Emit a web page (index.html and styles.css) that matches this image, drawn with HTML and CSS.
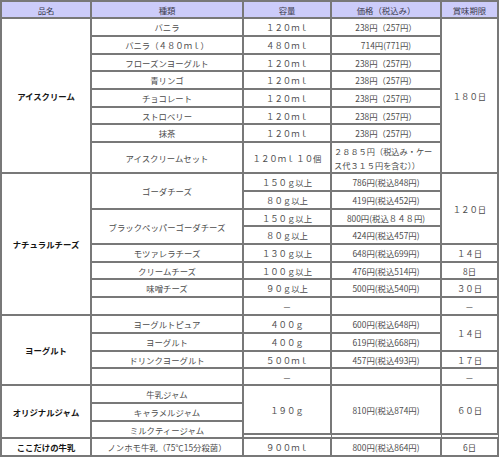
FILE: index.html
```html
<!DOCTYPE html>
<html lang="ja">
<head>
<meta charset="utf-8">
<title>商品一覧</title>
<link rel="stylesheet" href="styles.css">
</head>
<body>
<table class="items">
  <colgroup>
    <col class="w1"><col class="w2"><col class="w3"><col class="w4"><col class="w5">
  </colgroup>
  <thead>
    <tr class="h17">
      <th>品名</th><th>種類</th><th>容量</th><th>価格（税込み）</th><th>賞味期限</th>
    </tr>
  </thead>
  <tbody>
    <tr class="h18">
      <td rowspan="8" class="cat">アイスクリーム</td>
      <td>バニラ</td><td>１２０ｍｌ</td><td>238円（257円）</td>
      <td rowspan="8">１８０日</td>
    </tr>
    <tr class="h18"><td>バニラ（４８０ｍｌ）</td><td>４８０ｍｌ</td><td>714円(771円)</td></tr>
    <tr class="h17"><td>フローズンヨーグルト</td><td>１２０ｍｌ</td><td>238円（257円）</td></tr>
    <tr class="h18"><td>青リンゴ</td><td>１２０ｍｌ</td><td>238円（257円）</td></tr>
    <tr class="h18"><td>チョコレート</td><td>１２０ｍｌ</td><td>238円（257円）</td></tr>
    <tr class="h17"><td>ストロベリー</td><td>１２０ｍｌ</td><td>238円（257円）</td></tr>
    <tr class="h18"><td>抹茶</td><td>１２０ｍｌ</td><td>238円（257円）</td></tr>
    <tr class="h31"><td>アイスクリームセット</td><td>１２０ｍｌ １０個</td><td class="wrap">２８８５円（税込み・ケース代３１５円を含む））</td></tr>

    <tr class="h18">
      <td rowspan="8" class="cat">ナチュラルチーズ</td>
      <td rowspan="2">ゴーダチーズ</td><td>１５０ｇ以上</td><td>786円(税込848円)</td>
      <td rowspan="4">１２０日</td>
    </tr>
    <tr class="h18"><td>８０ｇ以上</td><td>419円(税込452円)</td></tr>
    <tr class="h17"><td rowspan="2">ブラックペッパーゴーダチーズ</td><td>１５０ｇ以上</td><td>800円(税込８４８円)</td></tr>
    <tr class="h18"><td>８０ｇ以上</td><td>424円(税込457円)</td></tr>
    <tr class="h18"><td>モツァレラチーズ</td><td>１３０ｇ以上</td><td>648円(税込699円)</td><td>１４日</td></tr>
    <tr class="h17"><td>クリームチーズ</td><td>１００ｇ以上</td><td>476円(税込514円)</td><td>8日</td></tr>
    <tr class="h18"><td>味噌チーズ</td><td>９０ｇ以上</td><td>500円(税込540円)</td><td>３０日</td></tr>
    <tr class="h18"><td></td><td>－</td><td></td><td>－</td></tr>

    <tr class="h18">
      <td rowspan="4" class="cat">ヨーグルト</td>
      <td>ヨーグルトピュア</td><td>４００ｇ</td><td>600円(税込648円)</td>
      <td rowspan="2">１４日</td>
    </tr>
    <tr class="h18"><td>ヨーグルト</td><td>４００ｇ</td><td>619円(税込668円)</td></tr>
    <tr class="h17"><td>ドリンクヨーグルト</td><td>５００ｍｌ</td><td>457円(税込493円)</td><td>１７日</td></tr>
    <tr class="h17"><td></td><td>－</td><td></td><td>－</td></tr>

    <tr class="h18">
      <td rowspan="3" class="cat">オリジナルジャム</td>
      <td>牛乳ジャム</td>
      <td rowspan="3" class="dbl">１９０ｇ</td>
      <td rowspan="3" class="dbl">810円(税込874円)</td>
      <td rowspan="3" class="dbl">６０日</td>
    </tr>
    <tr class="h18"><td>キャラメルジャム</td></tr>
    <tr class="h17"><td>ミルクティージャム</td></tr>

    <tr class="h18">
      <td class="cat">ここだけの牛乳</td>
      <td>ノンホモ牛乳（75℃15分殺菌）</td><td>９００ｍｌ</td><td>800円(税込864円)</td><td>6日</td>
    </tr>
  </tbody>
</table>
</body>
</html>
```

FILE: styles.css
```css
html, body {
  margin: 0;
  padding: 0;
  background: #ffffff;
}

.items {
  border-collapse: separate;
  border-spacing: 0;
  table-layout: fixed;
  width: 499px;
  border-top: 2px solid #787878;
  border-left: 2px solid #787878;
  font-family: "Noto Sans CJK JP", "Noto Sans", sans-serif;
  font-size: 8.4px;
  line-height: 12px;
  color: #4c4c4c;
}

.w1 { width: 90px; }
.w2 { width: 152px; }
.w3 { width: 88px; }
.w4 { width: 110px; }
.w5 { width: 57px; }

.items th,
.items td {
  box-sizing: border-box;
  padding: 0 1px;
  border-right: 2px solid #787878;
  border-bottom: 2px solid #787878;
  text-align: center;
  vertical-align: middle;
  overflow: hidden;
  white-space: nowrap;
}

.items th {
  background: #ccccfa;
  font-weight: normal;
  color: #3c3c50;
}

.items td.cat {
  font-weight: bold;
  color: #151515;
}

.items td.wrap {
  white-space: normal;
  text-align: left;
  padding: 0 1px 0 2px;
  font-size: 8.2px;
  line-height: 14px;
  letter-spacing: 0;
}

.items td.dbl {
  border-bottom: 6px double #787878;
}

.h17 { height: 17px; }
.h18 { height: 18px; }
.h31 { height: 31px; }
```
